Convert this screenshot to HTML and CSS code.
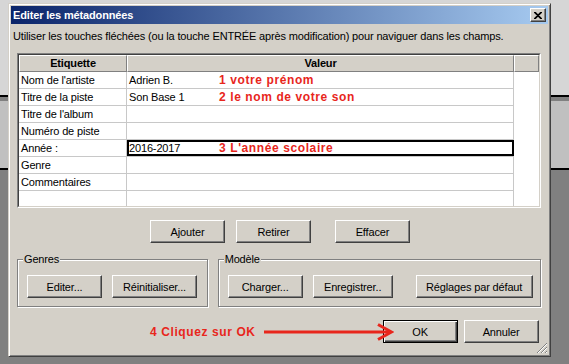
FILE: index.html
```html
<!DOCTYPE html>
<html lang="fr">
<head>
<meta charset="UTF-8">
<title>Editer les métadonnées</title>
<link rel="stylesheet" href="styles.css">
</head>
<body>
<div class="dialog">
<div class="titlebar">
<span class="title">Editer les métadonnées</span>
<button class="close" aria-label="Fermer">
<svg width="8" height="7" viewBox="0 0 8 7"><path d="M0 0 L7 7 M1 0 L8 7 M7 0 L0 7 M8 0 L1 7" stroke="#000" stroke-width="1.1" fill="none"/></svg>
</button>
</div>

<div class="content">
<p class="hint">Utiliser les touches fléchées (ou la touche ENTRÉE après modification) pour naviguer dans les champs.</p>

<div class="list">
<div class="list-inner">
<div class="list-head">
<div class="hcell c1">Etiquette</div>
<div class="hcell c2">Valeur</div>
<div class="hcell c3"></div>
</div>
<div class="row">
<div class="cell c1">Nom de l'artiste</div>
<div class="cell c2"><span class="val">Adrien B.</span><span class="note">1 votre prénom</span></div>
</div>
<div class="row">
<div class="cell c1">Titre de la piste</div>
<div class="cell c2"><span class="val">Son Base 1</span><span class="note">2 le nom de votre son</span></div>
</div>
<div class="row">
<div class="cell c1">Titre de l'album</div>
<div class="cell c2"></div>
</div>
<div class="row">
<div class="cell c1">Numéro de piste</div>
<div class="cell c2"></div>
</div>
<div class="row">
<div class="cell c1">Année :</div>
<div class="cell c2 editing"><span class="val">2016-2017</span><span class="note">3 L'année scolaire</span></div>
</div>
<div class="row">
<div class="cell c1">Genre</div>
<div class="cell c2"></div>
</div>
<div class="row">
<div class="cell c1">Commentaires</div>
<div class="cell c2"></div>
</div>
<div class="row">
<div class="cell c1"></div>
<div class="cell c2"></div>
</div>
</div>
</div>

<div class="actions">
<button class="btn">Ajouter</button>
<button class="btn retirer">Retirer</button>
<button class="btn effacer">Effacer</button>
</div>

<div class="groups">
<fieldset class="group genres">
<legend>Genres</legend>
<button class="btn">Editer...</button>
<button class="btn w85">Réinitialiser...</button>
</fieldset>
<fieldset class="group modele">
<legend>Modèle</legend>
<button class="btn">Charger...</button>
<button class="btn w80">Enregistrer..</button>
<button class="btn w117 far">Réglages par défaut</button>
</fieldset>
</div>

<div class="footer">
<span class="note big">4 Cliquez sur OK</span>
<svg class="arrow" width="130" height="18" viewBox="0 0 130 18">
<path d="M0 9 H127" stroke="#e8261c" stroke-width="3"/>
<path d="M114 1.5 L127.5 9 L114 16.5" stroke="#e8261c" stroke-width="3" fill="none"/>
</svg>
<button class="btn default">OK</button>
<button class="btn">Annuler</button>
</div>
</div>

<svg class="grip" width="12" height="12" viewBox="0 0 12 12">
<path d="M11 1 L1 11 M11 5 L5 11 M11 9 L9 11" stroke="#808080" stroke-width="1"/>
<path d="M11 2 L2 11 M11 6 L6 11 M11 10 L10 11" stroke="#ffffff" stroke-width="1"/>
</svg>
</div>
</body>
</html>
```

FILE: styles.css
```css
body {
margin: 0;
padding-top: 3px;
height: 361px;
overflow: hidden;
font-family: "Liberation Sans", Arial, sans-serif;
font-size: 11px;
letter-spacing: -0.15px;
color: #000;
background: linear-gradient(to bottom, #d6d6d6 0, #d6d6d6 95px, #000 95px, #000 97px, #808080 97px, #808080 101px, #c0c0c0 101px, #c0c0c0 168px, #000 168px, #000 170px, #808080 170px);
}
.dialog {
position: relative;
box-sizing: border-box;
margin-left: 8px;
width: 543px;
height: 354px;
padding: 2px;
background: #d4d0c8;
border: 1px solid;
border-color: #d4d0c8 #404040 #404040 #d4d0c8;
box-shadow: inset 1px 1px #fff, inset -1px -1px #808080;
}
.titlebar {
display: flex;
align-items: center;
justify-content: space-between;
height: 18px;
padding: 0 2px;
background: linear-gradient(to right, #0a246a, #a6caf0);
}
.title {
color: #fff;
font-weight: bold;
font-size: 11px;
}
.close {
display: flex;
align-items: center;
justify-content: center;
width: 16px;
height: 14px;
padding: 0;
background: #d4d0c8;
border: 1px solid;
border-color: #fff #404040 #404040 #fff;
box-shadow: inset -1px -1px #808080;
}
.content {
padding: 0 7px 0 6px;
}
.hint {
margin: 6px 0 0 -4px;
line-height: 13px;
}
.list {
margin-top: 10px;
width: 524px;
height: 155px;
box-sizing: border-box;
border: 1px solid;
border-color: #808080 #fff #fff #808080;
}
.list-inner {
height: 100%;
box-sizing: border-box;
border: 1px solid;
border-color: #404040 #d4d0c8 #d4d0c8 #404040;
background: #fff;
overflow: hidden;
}
.list-head {
display: flex;
height: 17px;
}
.hcell {
box-sizing: border-box;
background: #d4d0c8;
border: 1px solid;
border-color: #fff #808080 #808080 #fff;
font-weight: bold;
text-align: center;
line-height: 15px;
}
.c1 { width: 108px; }
.c2 { width: 387px; }
.c3 { width: 25px; }
.row {
display: flex;
width: 495px;
height: 17px;
box-sizing: border-box;
border-bottom: 1px solid #c8c8c8;
}
.cell {
box-sizing: border-box;
border-right: 1px solid #c8c8c8;
padding-left: 2px;
line-height: 16px;
white-space: nowrap;
}
.cell.c2 {
display: flex;
}
.editing {
outline: 2px solid #000;
outline-offset: -2px;
}
.val {
width: 90px;
}
.note {
color: #e8261c;
font-weight: bold;
font-size: 12px;
letter-spacing: 0.6px;
white-space: nowrap;
}
.btn {
box-sizing: border-box;
width: 75px;
height: 23px;
padding: 0;
background: #d4d0c8;
border: 1px solid;
border-color: #fff #404040 #404040 #fff;
box-shadow: inset -1px -1px #808080;
font-family: inherit;
font-size: 11px;
letter-spacing: -0.15px;
color: #000;
flex-shrink: 0;
}
.w80 { width: 80px; }
.w85 { width: 85px; }
.w117 { width: 117px; }
.actions {
display: flex;
margin-top: 12px;
padding-left: 133px;
}
.retirer { margin-left: 11px; }
.effacer { margin-left: 24px; }
.groups {
display: flex;
gap: 10px;
margin-top: 10px;
}
.group {
display: flex;
gap: 10px;
margin: 0;
padding: 9px 0 8px 9px;
border: 1px solid #808080;
box-shadow: inset 1px 1px #fff, 1px 1px #fff;
}
.genres { width: 191px; box-sizing: border-box; }
.modele { width: 324px; box-sizing: border-box; }
.group legend {
margin-left: -4px;
padding: 0 1px;
line-height: 13px;
background: #d4d0c8;
}
.far { margin-left: 13px; }
.footer {
display: flex;
align-items: center;
margin-top: 13px;
padding-left: 133px;
}
.note.big {
line-height: 16px;
flex-shrink: 0;
}
.arrow {
position: relative;
z-index: 1;
flex-shrink: 0;
margin: 0 -11px 0 8px;
}
.default {
border-color: #000;
box-shadow: inset 1px 1px #fff, inset -1px -1px #404040, inset -2px -2px #808080;
}
.footer .btn + .btn {
margin-left: 6px;
}
.grip {
position: absolute;
right: 2px;
bottom: 2px;
}
```
